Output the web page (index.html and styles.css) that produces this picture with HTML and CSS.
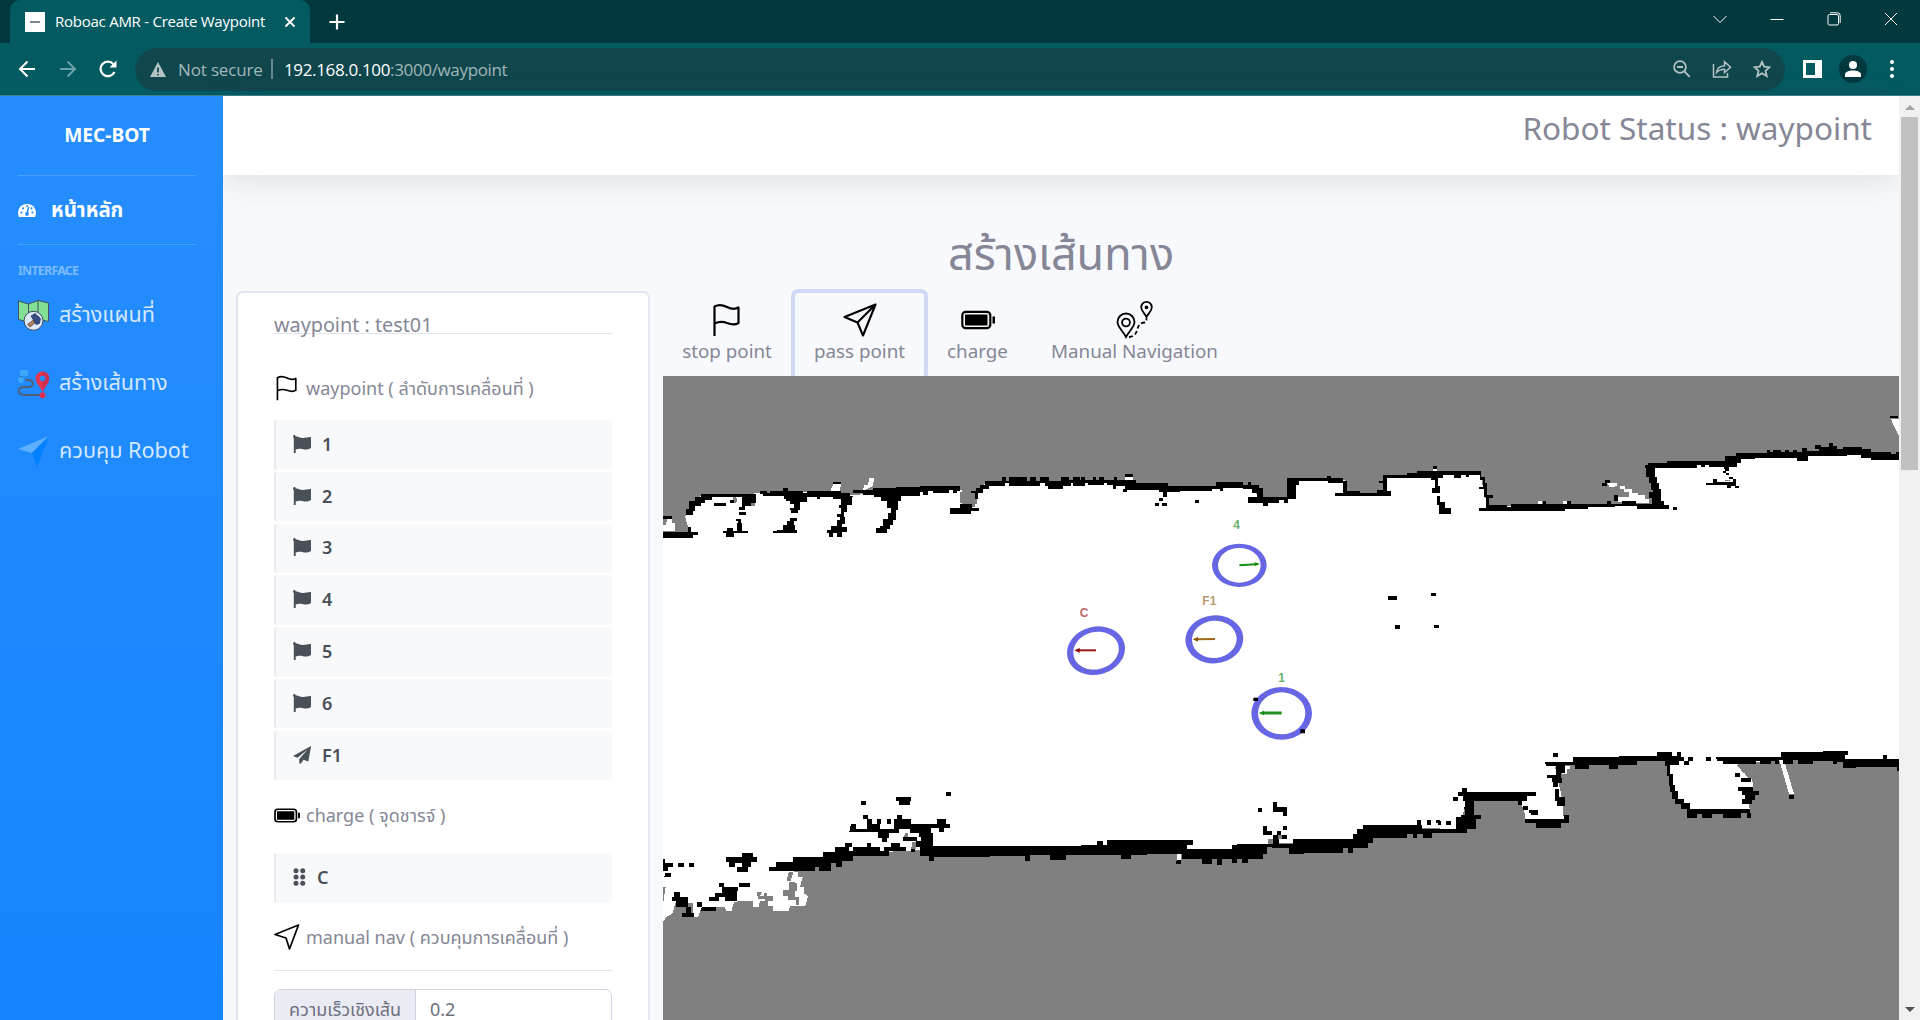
FILE: index.html
```html
<!DOCTYPE html>
<html lang="th">
<head>
<meta charset="utf-8">
<title>Roboac AMR - Create Waypoint</title>
<link rel="stylesheet" href="styles.css">
</head>
<body>
<svg class="defs" width="0" height="0">
  <symbol id="flag-line" viewBox="0 0 32 34"><path d="M3.5 33V3M3.500 3.500C8 1 12 2 16 4s8 2.500 11.500.5v15.500c-4 2.500-7.500 1.500-11.500 0s-8-1.500-12.500.5" fill="none" stroke="currentColor" stroke-width="2.200" stroke-linejoin="round"/></symbol>
  <symbol id="flag" viewBox="0 0 18 18"><path d="M1.600 1.200C5 1 7 3 10 3c3 0 5-1.200 8-1v11c-3 1.800-6 1.600-8 1.200-3-.7-5-.6-7.300.3V18H.8V3.200C-.4 1.800 0 .2 1.400.1 2.600.1 3 1.300 2.500 2z" fill="currentColor"/></symbol>
  <symbol id="battery" viewBox="0 0 34 19"><rect x="1.300" y="1.300" width="28" height="16.400" rx="3.500" fill="none" stroke="currentColor" stroke-width="2.200"/><path d="M4 4h22.500v11H4zM31.500 6H34v7h-2.500z" fill="currentColor"/></symbol>
</svg>

<header class="browser">
  <div class="tabs">
    <div class="tab">
      <span class="favicon"><i></i></span>
      <span class="tab-title">Roboac AMR - Create Waypoint</span>
      <svg width="12" height="12" viewBox="0 0 12 12"><path d="M1.500 1.500l9 9m0-9l-9 9" stroke="#fff" stroke-width="1.900"/></svg>
    </div>
    <svg class="newtab" width="16" height="16" viewBox="0 0 16 16"><path d="M8 .5v15M.5 8h15" stroke="#fff" stroke-width="2.200"/></svg>
    <div class="window-buttons">
      <svg width="14" height="14" viewBox="0 0 14 14"><path d="M.5 4l6.500 6.500L13.500 4"/></svg>
      <svg width="14" height="14" viewBox="0 0 14 14"><path d="M.5 7.500h13"/></svg>
      <svg width="14" height="14" viewBox="0 0 14 14"><rect x="1" y="2.500" width="10.500" height="10.500" rx="1.500"/><path d="M3 .8h7.500a2.700 2.700 0 0 1 2.700 2.700V11"/></svg>
      <svg width="14" height="14" viewBox="0 0 14 14"><path d="M1 1l12 12M13 1L1 13"/></svg>
    </div>
  </div>
  <div class="toolbar">
    <svg class="back" width="18" height="18" viewBox="0 0 18 18"><path d="M17 9H2M9.500 1.500L2 9l7.500 7.500" fill="none" stroke="#fff" stroke-width="2"/></svg>
    <svg class="forward" width="18" height="18" viewBox="0 0 18 18"><path d="M1 9h15M8.500 1.500L16 9l-7.500 7.500" fill="none" stroke="#6ba1a4" stroke-width="2"/></svg>
    <svg class="reload" width="18" height="18" viewBox="0 0 18 18"><path d="M15.500 12A7.300 7.300 0 1 1 14.500 4.200" fill="none" stroke="#fff" stroke-width="2.200"/><path d="M17.500 .5v7h-7z" fill="#fff"/></svg>
    <div class="omnibox">
      <svg width="16" height="15" viewBox="0 0 16 15"><path d="M8 0l8 15H0z" fill="#b5c3c5"/><path d="M8 5.500v5M8 12v1.600" stroke="#0f474d" stroke-width="1.700"/></svg>
      <span class="secure">Not secure</span>
      <span class="sep"></span>
      <span class="url"><b>192.168.0.100</b>:3000/waypoint</span>
      <span class="omni-icons">
        <svg width="18" height="18" viewBox="0 0 18 18"><circle cx="7" cy="7" r="5.900"/><path d="M4 7h6M11.500 11.500l5.300 5.300" /></svg>
        <svg width="20" height="18" viewBox="0 0 20 18"><path d="M1.500 4v13h14v-4M4.500 12.500c.5-4.500 3-6.500 8-6.800V1.800l6 5.400-6 5.400V9.200c-3.500 0-6 1-8 3.300z" stroke-width="1.500"/></svg>
        <svg width="18" height="18" viewBox="0 0 18 18"><path d="M9 1.800l2.200 4.900 5.300.5-4 3.600 1.200 5.300L9 13.300l-4.700 2.800 1.200-5.300-4-3.600 5.300-.5z"/></svg>
      </span>
    </div>
    <svg class="panel" width="19" height="18" viewBox="0 0 19 18"><path d="M0 0h19v18H0zM3 3v12h9V3z" fill="#fff" fill-rule="evenodd"/></svg>
    <span class="avatar"><svg width="16" height="16" viewBox="0 0 16 16"><circle cx="8" cy="4" r="4" fill="#fff"/><path d="M0 16v-2.500C0 11 4 9.500 8 9.500s8 1.500 8 4V16z" fill="#fff"/></svg></span>
    <svg class="dots" width="4" height="18" viewBox="0 0 4 18"><circle cx="2" cy="2" r="2"/><circle cx="2" cy="9" r="2"/><circle cx="2" cy="16" r="2"/></svg>
  </div>
</header>

<div class="page">
  <nav class="sidebar">
    <div class="brand">MEC-BOT</div>
    <hr>
    <a class="home">
      <svg width="18" height="14" viewBox="0 0 18 14"><path d="M1 14a9 9 0 1 1 16 0z" fill="#fff"/><path d="M9 10.500L10.700 4" stroke="#268cff" stroke-width="1.500"/><g fill="#268cff"><circle cx="9" cy="11" r="1.900"/><circle cx="3.500" cy="9.500" r="1.100"/><circle cx="5" cy="5.300" r="1.100"/><circle cx="9" cy="3" r="1"/><circle cx="13.500" cy="5.300" r="1.100"/><circle cx="14.500" cy="9.500" r="1.100"/></g></svg>
      <span>หน้าหลัก</span>
    </a>
    <hr>
    <div class="heading">INTERFACE</div>
    <a class="link">
      <svg width="31" height="31" viewBox="0 0 31 31"><path d="M.5 1l10 3 9.500-3.500L30.500 3v18.500l-10-2.500-10 3-10-2.500z" fill="#82df94" stroke="#3f5260"/><path d="M10.500 4v17M20 .5v18" stroke="#3f5260"/><circle cx="15.500" cy="20.800" r="9.500" fill="#dce9fb" stroke="#3c4a5a"/><path d="M9.500 24.500l6-4.500 2 2.500-5.500 4.500z" fill="#b77d55" stroke="#4d3c38" stroke-width=".7"/><path d="M13 16l4-2.500 5.500 5-1 5-3.500 1z" fill="#354d80" stroke="#26344f" stroke-width=".7"/></svg>
      <span>สร้างแผนที่</span>
    </a>
    <a class="link">
      <svg width="31" height="31" viewBox="0 0 31 31"><path d="M3 8v5M7 12h3c6 0 7 7 0 7H6c-7 0-7 8 0 8h17" fill="none" stroke="#4e6274" stroke-width="2"/><path d="M2 2h8v6H2z" fill="#3aa8ff"/><circle cx="3" cy="12" r="3" fill="#3aa8ff"/><path d="M24.500 24c-2-5-7-9-7-13.500a7 7 0 0 1 14 0c0 4.500-5 8.500-7 13.500z" fill="#e8344f"/><path d="M24.500 24c2-5 6.500-9 6.500-13.500a7 7 0 0 0-6.500-7z" fill="#cc2e4d"/><circle cx="24.500" cy="10.500" r="2.800" fill="#238dff"/><circle cx="24.500" cy="27.200" r="3" fill="#e02f4b"/></svg>
      <span>สร้างเส้นทาง</span>
    </a>
    <a class="link robot">
      <svg width="31" height="31" viewBox="0 0 31 31"><path d="M31 0L0 13l14 4z" fill="#5eb0ff"/><path d="M31 0L14 17l5 14z" fill="#0080ff"/></svg>
      <span>ควบคุม Robot</span>
    </a>
  </nav>

  <main class="content">
    <div class="topbar">Robot Status : waypoint</div>
    <h1>สร้างเส้นทาง</h1>
    <div class="columns">
      <section class="card">
        <div class="name">waypoint : test01</div>
        <div class="group first"><svg width="26" height="26"><use href="#flag-line"/></svg>waypoint ( ลำดับการเคลื่อนที่ )</div>
        <ul>
          <li><svg width="18" height="18"><use href="#flag"/></svg>1</li>
          <li><svg width="18" height="18"><use href="#flag"/></svg>2</li>
          <li><svg width="18" height="18"><use href="#flag"/></svg>3</li>
          <li><svg width="18" height="18"><use href="#flag"/></svg>4</li>
          <li><svg width="18" height="18"><use href="#flag"/></svg>5</li>
          <li><svg width="18" height="18"><use href="#flag"/></svg>6</li>
          <li><svg width="18" height="18" viewBox="0 0 18 18"><path d="M18 0v.8L15.300 15.500 10.500 13.700 8 17.500H6.300V13L14.500 3.500 4.500 11.700 0 10z" fill="currentColor"/></svg>F1</li>
        </ul>
        <div class="group charging"><svg width="26" height="15"><use href="#battery"/></svg>charge ( จุดชารจ์ )</div>
        <ul>
          <li class="grip"><svg width="13" height="18" viewBox="0 0 13 18" fill="currentColor"><circle cx="3" cy="2.800" r="2.500"/><circle cx="9.700" cy="2.800" r="2.500"/><circle cx="3" cy="9" r="2.500"/><circle cx="9.700" cy="9" r="2.500"/><circle cx="3" cy="15.200" r="2.500"/><circle cx="9.700" cy="15.200" r="2.500"/></svg>C</li>
        </ul>
        <div class="group last"><svg width="26" height="26" viewBox="0 0 26 26"><path d="M24.500 1L1 10.500l11 3.500 3.500 11z" fill="none" stroke="currentColor" stroke-width="1.700" stroke-linejoin="round"/></svg>manual nav ( ควบคุมการเคลื่อนที่ )</div>
        <div class="field"><label>ความเร็วเชิงเส้น</label><div class="value">0.2</div></div>
      </section>

      <section class="workspace">
        <div class="tools">
          <div class="tool stop"><svg width="32" height="34"><use href="#flag-line"/></svg>stop point</div>
          <div class="tool pass"><svg width="34" height="34" viewBox="0 0 34 34"><path d="M32.500 1.500L1.500 14l13 5.500 5.500 13zM32.500 1.500l-18 18" fill="none" stroke="currentColor" stroke-width="2.100" stroke-linejoin="round"/></svg>pass point</div>
          <div class="tool charge"><svg width="34" height="34"><use href="#battery"/></svg>charge</div>
          <div class="tool manual"><svg width="38" height="38" viewBox="0 0 38 38" fill="none" stroke="currentColor" stroke-width="1.800"><path d="M10 36C7 30 1.500 26 1.500 21a8.500 8.500 0 0 1 17 0c0 5-5.500 9-8.500 15z"/><circle cx="10" cy="21.500" r="3.900"/><path d="M30.500 16c-2-4-5.300-6-5.300-9.800a5.300 5.300 0 0 1 10.600 0c0 3.800-3.300 5.800-5.300 9.800z"/><circle cx="30.500" cy="6.300" r="1" fill="currentColor"/><path d="M13 36c12-1 5-14 15.500-14.500 2-.1 2-2 2-4.500" stroke-dasharray="4 2.500"/></svg>Manual Navigation</div>
        </div>
        <svg class="map" width="1236" height="644" viewBox="663 376 1236 644">
          <defs><pattern id="stripe" width="8" height="8" patternUnits="userSpaceOnUse" patternTransform="rotate(35) scale(1.900)"><rect width="8" height="8" fill="#6464fa"/><rect width="4" height="8" fill="#6a68cf"/></pattern></defs>
          <g shape-rendering="crispEdges">
          <path fill="#fff" d="M663 536H1380V526H1899V757H1480V800H663z"/>
          <!-- upper left wall -->
          <g transform="translate(660 440) scale(.33333)">
            <path fill="#fff" d="M9 360V290H95L85 262 75 230 90 200 125 165 300 160 520 155 580 165 780 150H905V200H945L950 160 975 130H1260V360z"/>
            <path fill="#fff" d="M520 130h24l-5 24h-28zM628 115h15l-6 24-20 10h-9l6-14h9zM20 238h16v12h8v22H9v-17h10zM670 143h14v8h-14z"/>
            <path fill="#808080" d="M220 168l12 8-4 14-12-4zM270 190h14v8h-14zM900 190v-35h46l4 15 2 22z"/>
            <path d="M9 275H85V262H92V275H115V285H100V293H9zM9 229h27v8H9zM122 163H300V152H320V160H330V154H370V143H384V152H428V160H440V152H542V160H570V168H580V150H640V145H708V142H780V138H900V152H890V160H880V150H868V160H818V154H805V164H790V155H780V168H722V182H714V210H708V240H698V254H690V268H680V280H648V264H660V258H670V236H684V218H692V205H680V184H664V172H642V164H610V158H580V170H575V194H560V215H552V230H556V252H546V262H562V276H545V290H532V280H520V290H508V280H500V270H512V258H530V240H540V230H530V222H542V205H536V194H544V178H520V170H480V178H470V172H440V186H420V210H414V220H394V210H390V204H402V192H390V184H378V178H372V168H310V162H288V188H272V198H254V210H236V202H246V170H222V188H210V180H222V170H155V180H135V190H124V198H106V212H98V224H78V208H86V182H104V172H122zM162 190H198V198H162zM236 216H258V226H236zM228 236H242V250H246V274H264V280H222V290H198V280H190V272H202V264H218V274H230V250H234V244H228zM390 234H412V242H402V256H406V270H412V280H338V274H350V270H370V256H380V244H390zM520 126H544V132H520zM870 204H900V192H936V204H958V212H932V222H870zM934 154H948V144H960V134H974V122H1026V112H1038V122H1048V112H1100V122H1110V112H1128V122H1140V112H1155V112H1166V122H1204V112H1226V120H1240V112H1260V132H1210V146H1164V138H1152V130H1140V138H1046V130H1034V138H988V146H970V158H954V178H944V158H934z"/>
          </g>
          <!-- upper middle wall -->
          <g transform="translate(1040 440) scale(.33333)">
            <path fill="#fff" d="M0 400V130H250L380 145H640L660 180H740L750 120H915V165H1020L1035 110 1180 100H1320V400zM255 108h24v12h-24zM1180 85h12v12h-12z"/>
            <path fill="#808080" d="M1020 130h12v25h-16z"/>
            <path d="M0 112H6V122H16V112H26V122H64V112H84V120H98V112H112V120H122V112H136V120H158V112H168V120H178V112H192V120H222V112H230V120H288V128H384V138H528V126H610V136H624V126H634V136H656V144H670V170H742V115H862V108H872V114H910V122H922V152H960V158H1012V150H1030V130H1018V124H1030V105H1100V98H1130V94H1320V104H1290V110H1278V104H1266V110H1256V104H1244V118H1236V104H1196V146H1200V158H1178V148H1174V142H1184V118H1174V114H1040V130H1042V152H1054V168H886V160H910V130H864V124H778V134H768V178H744V188H732V180H718V188H684V199H670V188H624V172H650V160H636V148H608V144H548V152H540V146H516V152H420V156H380V172H370V156H358V150H262V155H250V148H254V138H228V146H218V136H202V128H192V136H144V130H136V138H98V130H92V138H70V146H24V138H14V130H0zM255 101H280V110H255zM356 174H368V182H356zM344 190H356V199H344zM367 190H380V199H367zM465 179H478V189H465zM1180 78H1190V88H1180zM1190 170H1202V186H1218V204H1232V222H1196V190H1190zM1045 469H1072V480H1045zM1173 459H1187V469H1173zM1065 554H1079V567H1065zM1183 554H1197V564H1183z"/>
          </g>
          <!-- upper right wall -->
          <g transform="translate(1400 380) scale(.33333)">
            <path fill="#fff" d="M0 450V290L240 280 262 378H775L750 255 980 250 1015 225H1210L1380 215 1410 230H1497V450zM415 363h12v10h-12zM488 363h13v10h-13zM245 356h22v14h-22zM1472 116h25v52zM1258 200h26v10h-26zM622 310h28v8h26v10h20v10h18v8h20v10h14v14h-42v-5h-52v-15h32v-14h-14v-8h-28v-8h-16zM100 268h12v6h-12z"/>
            <path d="M0 286H20V278H50V274H242V290H256V308H262V345H278V355H268V374H320V380H334V373H620V364H632V373H665V364H708V373H756V355H748V337H760V330H752V310H746V290H738V264H734V255H745V248H800V244H975V236H990V236H974V228H1008V218H1100V211H1110V217H1120V211H1144V217H1156V211H1168V217H1180V211H1190V217H1206V203H1222V212H1256V206H1244V194H1264V202H1286V190H1298V198H1312V206H1328V200H1386V206H1412V217H1474V222H1488V217H1497V240H1412V234H1384V224H1340V227H1224V244H1190V234H1066V238H1024V248H1010V260H988V274H976V266H972V262H926V256H914V262H902V256H890V264H766V290H772V310H776V328H782V362H792V376H806V388H710V378H645V382H565V388H494V392H236V383H258V352H252V328H238V320H250V300H240V286H206V292H198V286H184V294H162V286H128V294H115V318H120V338H96V324H106V300H92V294H0zM110 348H120V366H136V384H152V402H118V376H110zM430 363H439V373H430zM500 363H512V373H500zM98 259H110V268H98zM616 299H630V308H620V318H606V309H616zM642 346H654V362H642zM819 380H832V389H819zM968 272H978V280H988V290H1000V296H1008V318H1016V325H1006V318H992V325H982V315H918V309H938V298H950V306H1000V298H988V286H978V280H968zM1470 109H1494V115H1470z"/>
            <path fill="#808080" d="M645 318h14v8h-14zM660 328h12v8h-12zM975 299h14v5h-14z"/>
          </g>
          <!-- lower left wall -->
          <g transform="translate(660 770) scale(.33333)">
            <path fill="#fff" d="M9 80V455L20 440 38 430 46 400 100 400V440H115L122 418 160 412 195 412 200 424H214L222 398 238 392H280V410H296L300 394H325V408H340V424H386L390 408H436L444 378 432 370V350H420L428 322H414V305H402L560 255 690 245 780 240H1260V80z"/>
            <path fill="#808080" d="M9 352h8l-5 30-3 20zM386 306h14l-8 26h-12zM290 366h16l-6 12h12v-10h8v10h20v-12h0v26h-24v-6h-22zM404 336h-16v24h-20v18h16v12h24v14h10v-22h-14v-20h6v-22h-6zM735 190h10v14h-14zM756 216h12v20h-14z"/>
            <path d="M780 228H1260V256H1218V270H1170V256H1110V272H1096V258H990V260H822V272H806V258H780zM326 304V290H348V277H398V262H490V246H526V232H556V220H575V230H568V244H580V232H620V218H634V232H660V244H672V232H694V218H720V230H738V244H686V258H580V274H546V290H528V278H512V302H478V290H464V304zM568 187L573 162H588V176H620V148H608V134H623V148H636V162H650V148H664V162H660V176H702V148H712V134H727V148H754V162H830V148H858V162H869V175H852V187H836V175H812V190H820V228H808V258H780V230H768V214H782V202H776V190H750V176H716V190H688V204H680V217H666V204H654V187zM680 148H694V161H680zM602 93H618V106H602zM708 80H754V93H750V106H718V94H708zM858 67H873V79H858zM728 202H772V214H728zM785 190H804V214H785zM9 266H16V280H40V291H24V304H9zM55 280H72V292H55zM86 280H103V292H86zM16 308H32V322H12zM198 262H246V250H278V262H290V275H272V290H264V305H232V291H246V278H226V291H206V275H198zM176 338H192V350H176zM238 338H270V350H238zM186 350H235V364H230V392H194V382H176V393H146V381H164V368H186zM42 367H60V380H84V410H48V394H36V381H42zM78 412H92V428H102V440H66V428H78zM110 395H126V410H110zM126 410H168V423H122zM754 236H764V246H754z"/>
          </g>
          <!-- lower middle wall -->
          <g transform="translate(1060 740) scale(.33333)">
            <path fill="#fff" d="M0 100V330H380L600 325 640 310H880L920 265H1190L1220 170 1320 165V100z"/>
            <path d="M0 318H62V315H112V302H128V314H142V301H398V315H382V328H516V315H532V312H638V285H622V285H608V258H622V272H636V284H652V272H664V286H656V312H684V312H698V298H878V282H892V268H908V255H1070V240H1082V255H1086V266H1190V238H1202V224H1214V208H1210V168H1194V156H1206V143H1221V156H1320V184H1240V224H1262V237H1248V267H1221V280H1116V294H1088V281H1072V294H1058V282H1042V294H938V310H924V325H880V338H864V325H850V338H732V342H686V324H636V322H622V342H608V356H564V370H546V356H532V370H516V356H486V374H472V356H456V373H426V356H366V342H260V346H212V358H182V346H16V358H0zM350 360H364V373H348zM594 204H607V217H594zM638 187H650V200H682V228H668V215H638zM668 258H681V271H668zM667 285H681V298H667zM1100 241H1113V254H1100zM1128 241H1144V254H1134V248H1128zM1158 241H1173V254H1158zM1180 170H1194V183H1180z"/>
            <path fill="#fff" d="M351 343h13v16h-13z"/>
            <path fill="#808080" d="M624 298h14v14h-14zM655 286h12v12h-12z"/>
          </g>
          <!-- lower right wall -->
          <g transform="translate(1440 730) scale(.33333)">
            <path fill="#fff" d="M0 60V300H60L80 200H240L258 275H372L365 200 345 110 400 95 680 90 700 200 750 245 930 240 925 220 940 160 890 100 1025 90 1215 95H1377V60z"/>
            <path fill="#808080" d="M360 110h40v100h-32zM102 213h130v20h20l6 60h-150zM925 145l-35-40h120l20 100z"/>
            <path fill="#fff" d="M1018 90h14l30 102h-15zM364 122h12v-14h14v10h-10v14h-14zM900 130h14v14h20l6 22h-44zM344 174h12v18h-8z"/>
            <path d="M0 272H4V284H0zM18 272H33V284H18zM0 298H48V262H62V254H76V212H70V198H54V187H66V174H80V186H288V198H260V213H246V226H234V213H102V254H122V266H108V298H82V310H0zM40 201H54V213H40zM250 228H264V241H250zM266 240H294V254H274V250H266zM255 267H372V255H386V280H362V294H288V280H255zM340 68H355V82H340zM315 96H400V82H536V78H652V65H696V78H710V66H724V80H732V94H745V80H758V92H748V104H732V94H716V106H690V132H698V166H706V184H714V206H732V220H750V238H930V250H934V264H922V250H904V264H848V252H816V264H786V252H772V264H742V238H724V222H704V208H696V186H690V168H686V138H680V108H674V92H590V104H534V118H506V106H448V118H404V106H374V130H362V144H366V160H354V172H340V156H336V144H320V134H348V108H318zM344 176H356V200H376V227H352V212H346zM799 80H814V92H799zM826 80H1024V66H1148V62H1224V76H1214V88H1328V76H1342V88H1377V124H1370V112H1248V115H1210V96H1190V102H1180V92H1120V102H1074V90H1060V102H1030V90H1016V102H1004V92H992V102H960V92H948V102H848V92H832zM884 130H900V142H884zM904 144H932V156H904zM894 170H940V184H958V196H946V210H936V222H906V206H916V194H906V184H894zM1048 194H1062V206H1048z"/>
          </g>
          </g>
          <!-- waypoint markers -->
          <g transform="translate(1040 440) scale(.33333)">
            <path fill="url(#stripe)" fill-rule="evenodd" d="M516 376a82 65 0 1 0 164 0a82 65 0 1 0-164 0zM534 376a64 52 0 1 1 128 0a64 52 0 1 1-128 0z"/>
            <path fill="url(#stripe)" fill-rule="evenodd" transform="rotate(-14 168 632)" d="M80 632a88 72 0 1 0 176 0a88 72 0 1 0-176 0zM99 632a69 56 0 1 1 138 0a69 56 0 1 1-138 0z"/>
            <path fill="url(#stripe)" fill-rule="evenodd" transform="rotate(-5 523 598)" d="M436 598a87 72 0 1 0 174 0a87 72 0 1 0-174 0zM456 598a67 56 0 1 1 134 0a67 56 0 1 1-134 0z"/>
            <path fill="url(#stripe)" fill-rule="evenodd" d="M634 820a91 79 0 1 0 182 0a91 79 0 1 0-182 0zM654 820a71 63 0 1 1 142 0a71 63 0 1 1-142 0z"/>
            <path d="M640 773h14v10h-14zM781 868h14v12h-14z"/>
            <path stroke="#159015" stroke-width="6" d="M598 375.500L648 373"/><path fill="#159015" d="M660 372l-16-6v13z"/>
            <path stroke="#209020" stroke-width="9" d="M668 819H725"/><path fill="#159015" d="M656 819l16-7v14z"/>
            <path stroke="#9c6a16" stroke-width="6" d="M470 598L525 597"/><path fill="#865508" d="M458 598l16-7v14z"/>
            <path stroke="#9a1717" stroke-width="6" d="M114 631H168"/><path fill="#8b0000" d="M103 631l16-7v14z"/>
            <g class="map-labels"><text x="580" y="266" fill="#66b266">4</text><text x="715" y="725" fill="#66b266">1</text><text x="487" y="496" fill="#ba9a6a">F1</text><text x="119" y="531" fill="#bd6868">C</text></g>
          </g>
        </svg>
      </section>
    </div>
  </main>
  <div class="scrollbar">
    <svg width="10" height="5" viewBox="0 0 10 5"><path d="M0 5l5-5 5 5z" fill="#a3a3a3"/></svg>
    <div class="thumb"></div>
    <svg class="down" width="10" height="5" viewBox="0 0 10 5"><path d="M0 0l5 5 5-5z" fill="#505050"/></svg>
  </div>
</div>
</body>
</html>
```
FILE: styles.css
```css
* { box-sizing: border-box; }
body { margin: 0; width: 1920px; height: 1020px; overflow: hidden; display: flex; flex-direction: column; font-family: "Noto Sans", "Noto Sans Thai", sans-serif; color: #858796; background: #f8f9fc; }
svg { display: block; flex: none; }
.defs { position: absolute; }
.browser { flex: none; height: 96px; background: #045a61; border-bottom: 1px solid #3b8288; font-family: "Open Sans", "Noto Sans", sans-serif; white-space: nowrap; }
.tabs { height: 43px; background: #02393e; display: flex; align-items: center; padding-left: 10px; }
.tab { width: 300px; height: 43px; background: #045a61; border-radius: 10px 10px 0 0; display: flex; align-items: center; padding-left: 15px; }
.favicon { width: 20px; height: 20px; flex: none; background: #fff; display: flex; align-items: center; justify-content: center; }
.favicon i { width: 10px; height: 2px; background: #788a9a; }
.tab-title { width: 239px; flex: none; padding: 0 0 2px 10px; font-size: 15px; letter-spacing: -.25px; color: #fff; }
.newtab { margin-left: 19px; }
.window-buttons { margin-left: auto; display: flex; gap: 43px; padding: 0 22px 6px 0; }
.window-buttons svg { fill: none; stroke: #fff; stroke-width: 1; }
.toolbar { height: 52px; display: flex; align-items: center; padding-left: 18px; }
.forward { margin-left: 23px; }
.reload { margin-left: 22px; }
.omnibox { width: 1650px; height: 43px; margin-left: 18px; border-radius: 22px; background: #0f474d; display: flex; align-items: center; padding: 0 14px 0 15px; font-size: 17px; letter-spacing: -.15px; color: #a3b8ba; }
.secure { width: 94px; padding-left: 12px; }
.sep { width: 2px; height: 20px; background: #6c898d; margin: 0 11px; }
.url { letter-spacing: -.35px; }
.url b { font-weight: 400; color: #fff; }
.omni-icons { margin-left: auto; display: flex; gap: 21px; }
.omni-icons svg { fill: none; stroke: #b5c3c5; stroke-width: 1.8; }
.panel { margin-left: 18px; }
.avatar { width: 28px; height: 28px; margin-left: 17px; border-radius: 50%; background: #02393e; display: flex; align-items: center; justify-content: center; }
.dots { margin-left: 23px; fill: #fff; }

.page { flex: 1; min-height: 0; display: flex; }
.sidebar { position: relative; z-index: 1; width: 223px; flex: none; padding: 0 27px 0 18px; background: linear-gradient(#268eff, #1684ff); color: #fff; white-space: nowrap; }
.sidebar hr { margin: 0; border: 0; height: 1px; background: #479fff; }
.brand { height: 79px; padding-top: 6px; line-height: 66px; text-align: center; font-size: 19.2px; font-weight: 700; }
.home { height: 68px; display: flex; align-items: center; gap: 15px; font-size: 20.4px; font-weight: 700; }
.heading { height: 52px; padding-top: 16px; font-size: 12.5px; line-height: 20px; font-weight: 700; letter-spacing: -.8px; color: #7cbbff; }
.link { height: 68px; display: flex; align-items: flex-start; padding-top: 3px; gap: 10px; font-size: 21.6px; line-height: 27px; color: #d3e8ff; }

.content { width: 1676px; flex: none; display: flex; flex-direction: column; }
.topbar { flex: none; height: 79px; background: #fff; box-shadow: 0 3px 35px rgba(58,59,69,.15); padding-right: 27px; text-align: right; font-size: 31.5px; line-height: 64px; }
h1 { flex: none; margin: 0; height: 114px; padding-top: 43px; text-align: center; font-size: 45px; line-height: 70px; font-weight: 400; }
.columns { display: flex; flex: 1; min-height: 0; }
.card { width: 414px; margin: 2px 13px -10px; background: #fff; border: 2px solid #e3e6f0; border-radius: 7px; padding: 18px 36px 0 36px; overflow: hidden; white-space: nowrap; }
.name { height: 23px; line-height: 28px; border-bottom: 1px solid #e3e4e8; font-size: 19.8px; }
.group { height: 73px; display: flex; align-items: center; gap: 6px; font-size: 18px; line-height: 28px; }
.group svg { color: #000; }
.first { height: 86px; padding-top: 21px; }
.charging { padding-bottom: 3px; }
.last { height: 68px; padding-top: 2px; border-bottom: 1px solid #e3e4e8; }
ul { list-style: none; margin: 0; padding: 0; display: flex; flex-direction: column; gap: 2.3px; }
li { height: 49.5px; display: flex; align-items: center; gap: 11px; padding: 0 0 2px 17px; background: #f8f9fb; border-left: 2px solid #e7e9ed; border-radius: 3px; color: #495057; font-size: 18px; font-weight: 600; }
.field { display: flex; height: 48px; margin-top: 18px; font-size: 18px; line-height: 39px; color: #6e707e; border: 1px solid #d1d3e2; border-radius: 7px; }
.field label { width: 141px; padding-left: 14px; background: #eaecf4; border-right: 1px solid #d1d3e2; border-radius: 6px 0 0 6px; }
.value { padding-left: 14px; }
.workspace { width: 1236px; display: flex; flex-direction: column; }
.tools { display: flex; height: 87px; flex: none; }
.tool { height: 92px; padding-top: 11px; display: flex; flex-direction: column; align-items: center; font-size: 18.8px; line-height: 24px; white-space: nowrap; }
.tool svg { color: #000; margin: 3px 0 2px; height: 34px; }
.manual svg { margin: 1px 0 0; height: 38px; }
.stop { width: 128px; }
.pass { width: 137px; padding-top: 7px; border: 4px solid #cfd8f5; border-radius: 7px; }
.charge { width: 99px; }
.manual { width: 215px; }
.map { background: #808080; position: relative; }
.map-labels { font: bold 36px "Liberation Sans", sans-serif; }
.scrollbar { width: 21px; background: #f1f1f1; display: flex; flex-direction: column; align-items: center; padding-top: 9px; }
.thumb { width: 17px; height: 353px; margin-top: 7px; background: #c1c1c1; }
.down { margin-top: auto; margin-bottom: 8px; }
```
